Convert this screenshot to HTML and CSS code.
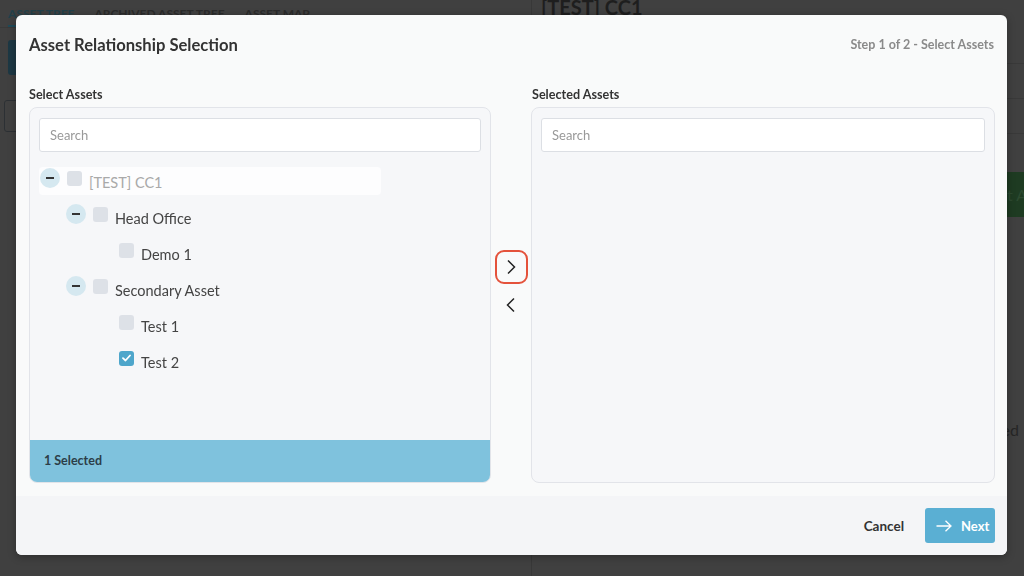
FILE: index.html
```html
<!DOCTYPE html>
<html lang="en">
<head>
  <meta charset="UTF-8">
  <title>Asset Relationship Selection</title>
  <link rel="stylesheet" href="styles.css">
</head>
<body>
  <!-- page behind the dialog -->
  <div class="page">
    <div class="left-pane">
      <div class="tabs">
        <div class="tab active">ASSET TREE</div>
        <div class="tab">ARCHIVED ASSET TREE</div>
        <div class="tab">ASSET MAP</div>
      </div>
      <div class="page-btn"></div>
      <div class="page-field"></div>
    </div>
    <div class="right-pane">
      <div class="asset-title">[TEST] CC1</div>
      <div class="page-line"></div>
      <div class="page-line"></div>
      <div class="page-line"></div>
      <div class="page-actions"><div class="green-btn">Select Asset</div></div>
      <div class="page-note">Nothing selected</div>
    </div>
  </div>

  <!-- dialog -->
  <div class="modal">
    <div class="modal-header">
      <div class="modal-title">Asset Relationship Selection</div>
      <div class="modal-step">Step 1 of 2 - Select Assets</div>
    </div>
    <div class="modal-body">
      <div class="col col-left">
        <div class="col-label">Select Assets</div>
        <div class="panel">
          <input type="text" class="search" placeholder="Search">
          <div class="tree">
            <div class="tree-row lvl0 hl">
              <span class="toggle"></span><span class="check"></span><span class="tree-text disabled">[TEST] CC1</span>
            </div>
            <div class="tree-row lvl1">
              <span class="toggle"></span><span class="check"></span><span class="tree-text">Head Office</span>
            </div>
            <div class="tree-row lvl2">
              <span class="spacer"></span><span class="check"></span><span class="tree-text">Demo 1</span>
            </div>
            <div class="tree-row lvl1">
              <span class="toggle"></span><span class="check"></span><span class="tree-text">Secondary Asset</span>
            </div>
            <div class="tree-row lvl2">
              <span class="spacer"></span><span class="check"></span><span class="tree-text">Test 1</span>
            </div>
            <div class="tree-row lvl2">
              <span class="spacer"></span>
              <span class="check checked">
                <svg width="9" height="8" viewBox="0 0 9 8"><path d="M1 4.2 L3.5 6.5 L8 1.5" fill="none" stroke="#fff" stroke-width="1.8" stroke-linecap="round" stroke-linejoin="round"/></svg>
              </span>
              <span class="tree-text">Test 2</span>
            </div>
          </div>
          <div class="selected-bar">1 Selected</div>
        </div>
      </div>
      <div class="col-mid">
        <div class="move-btn focus">
          <svg width="10" height="16" viewBox="0 0 10 16"><path d="M2 1.5 L8.5 8 L2 14.5" fill="none" stroke="#222" stroke-width="1.5"/></svg>
        </div>
        <div class="move-btn">
          <svg width="10" height="16" viewBox="0 0 10 16"><path d="M8 1.5 L1.5 8 L8 14.5" fill="none" stroke="#222" stroke-width="1.5"/></svg>
        </div>
      </div>
      <div class="col col-right">
        <div class="col-label">Selected Assets</div>
        <div class="panel">
          <input type="text" class="search" placeholder="Search">
        </div>
      </div>
    </div>
    <div class="modal-footer">
      <div class="btn-cancel">Cancel</div>
      <div class="btn-next">
        <svg width="16" height="12" viewBox="0 0 16 12"><path d="M0.5 6 H15 M9.5 0.7 L15 6 L9.5 11.3" fill="none" stroke="#fff" stroke-width="1.3"/></svg>
        <span>Next</span>
      </div>
    </div>
  </div>
</body>
</html>
```

FILE: styles.css
```css
body {
  margin: 0;
  font-family: Lato, "Open Sans", sans-serif;
  background: #404040;
  height: 100vh;
  overflow: hidden;
}

/* page behind the dialog (already dimmed) */
.page {
  display: flex;
  height: 100vh;
}
.left-pane {
  width: 531px;
  border-right: 1px solid #383838;
}
.tabs {
  display: flex;
  height: 27px;
  border-bottom: 1px solid #393939;
  padding-left: 8px;
}
.tab {
  font-size: 12px;
  font-weight: bold;
  color: #2b2b2b;
  margin-right: 20px;
  padding-top: 6px;
}
.tab.active {
  color: #23404a;
  border-bottom: 2px solid #1f4a58;
}
.page-btn {
  margin: 12px 0 0 8px;
  width: 60px;
  height: 35px;
  border-radius: 3px;
  background: #1d3844;
}
.page-field {
  margin: 25px 0 0 4px;
  width: 60px;
  height: 30px;
  border: 1px solid #2c3034;
  border-radius: 3px;
}
.right-pane {
  flex: 1;
  overflow: hidden;
}
.asset-title {
  font-size: 20px;
  font-weight: bold;
  color: #1e1e1e;
  margin: -5px 0 0 9px;
  height: 34px;
}
.page-line {
  height: 34px;
  border-bottom: 1px solid #393939;
}
.page-actions {
  display: flex;
  justify-content: flex-end;
  margin-top: 38px;
}
.green-btn {
  background: #1e3b22;
  color: #2c4a30;
  font-size: 16px;
  height: 45px;
  line-height: 45px;
  padding: 0 14px;
  margin-right: -45px;
  white-space: nowrap;
}
.page-note {
  text-align: right;
  font-size: 16px;
  color: #262626;
  margin-top: 203px;
  padding-right: 5px;
}

/* dialog */
.modal {
  position: fixed;
  left: 16px;
  top: 15px;
  width: 991px;
  height: 540px;
  background: #f9fafa;
  border-radius: 6px;
  display: flex;
  flex-direction: column;
  overflow: hidden;
  box-shadow: 0 2px 8px rgba(0, 0, 0, 0.3);
}
.modal-header {
  height: 60px;
  display: flex;
  align-items: center;
  justify-content: space-between;
  padding: 0 13px;
}
.modal-title {
  font-size: 16.6px;
  font-weight: bold;
  color: #333;
}
.modal-step {
  font-size: 12.5px;
  font-weight: bold;
  color: #8a8a8a;
  margin-top: -1px;
}
.modal-body {
  flex: 1;
  display: flex;
  padding: 12px 12px 13px 13px;
}
.col {
  display: flex;
  flex-direction: column;
}
.col-left {
  width: 462px;
}
.col-right {
  flex: 1;
}
.col-label {
  font-size: 12.6px;
  font-weight: bold;
  color: #333;
  height: 16px;
  line-height: 16px;
  margin-bottom: 4px;
}
.col-right .col-label {
  padding-left: 1px;
}
.panel {
  flex: 1;
  display: flex;
  flex-direction: column;
  background: #f6f7f9;
  border: 1px solid #e2e4e9;
  border-radius: 8px;
  overflow: hidden;
}
.search {
  margin: 10px 9px 0 9px;
  height: 34px;
  box-sizing: border-box;
  border: 1px solid #dcdfe4;
  border-radius: 3px;
  background: #fff;
  padding: 0 10px;
  font-family: Lato, sans-serif;
  font-size: 13px;
  color: #333;
  outline: none;
}
.search::placeholder {
  color: #999;
}

/* tree */
.tree {
  flex: 1;
  padding: 8px 10px 0 10px;
}
.tree-row {
  display: flex;
  align-items: center;
  height: 36px;
  position: relative;
}
.tree-row.lvl1 { padding-left: 26px; }
.tree-row.lvl2 { padding-left: 52px; }
.tree-row.hl::before {
  content: "";
  position: absolute;
  left: -1px;
  top: 7px;
  width: 342px;
  height: 28px;
  background: #fdfdfe;
  border-radius: 4px;
}
.toggle, .spacer {
  width: 20px;
  height: 20px;
  flex-shrink: 0;
  margin-right: 7px;
  position: relative;
}
.toggle {
  border-radius: 50%;
  background: #d5e8f0;
}
.toggle::after {
  content: "";
  position: absolute;
  left: 6px;
  top: 9px;
  width: 8px;
  height: 2px;
  background: #333;
}
.check {
  width: 15px;
  height: 15px;
  border-radius: 3px;
  background: #dde1e7;
  margin-right: 7px;
  flex-shrink: 0;
  position: relative;
  display: flex;
  align-items: center;
  justify-content: center;
}
.check.checked {
  background: #4ea6cb;
}
.tree-text {
  font-size: 14.5px;
  color: #444;
  padding-top: 8px;
  position: relative;
}
.tree-text.disabled {
  color: #a9a9a9;
}
.selected-bar {
  height: 42px;
  line-height: 42px;
  background: #7fc2dd;
  padding-left: 14px;
  font-size: 12.5px;
  font-weight: bold;
  color: #2c3e48;
}

/* move buttons */
.col-mid {
  width: 40px;
  display: flex;
  flex-direction: column;
  align-items: center;
  padding-top: 163px;
  gap: 4px;
}
.move-btn {
  width: 33px;
  height: 34px;
  box-sizing: border-box;
  display: flex;
  align-items: center;
  justify-content: center;
  border: 2px solid transparent;
  border-radius: 9px;
}
.move-btn.focus {
  border-color: #e4523b;
}

/* footer */
.modal-footer {
  height: 59px;
  background: #f4f5f7;
  display: flex;
  align-items: center;
  justify-content: flex-end;
  padding-right: 12px;
}
.btn-cancel {
  font-size: 13.5px;
  font-weight: bold;
  color: #333;
  margin-right: 21px;
  padding-top: 1px;
}
.btn-next {
  width: 70px;
  height: 35px;
  box-sizing: border-box;
  background: #5aafd3;
  border-radius: 3px;
  display: flex;
  align-items: center;
  padding-left: 11px;
  gap: 9px;
  color: #fff;
  font-size: 13px;
  font-weight: bold;
}
```
